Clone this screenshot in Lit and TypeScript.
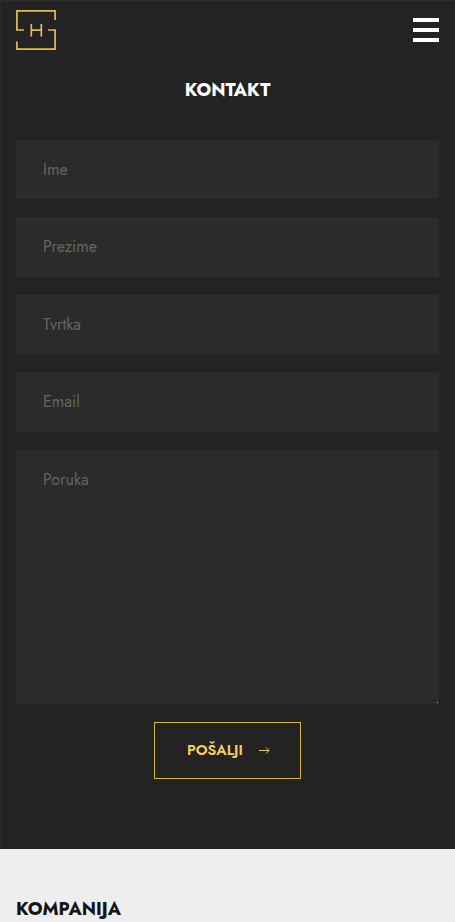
import { LitElement, html, css } from "lit";
import { customElement } from "lit/decorators.js";

const FIELDS = [
  { name: "ime", label: "Ime" },
  { name: "prezime", label: "Prezime" },
  { name: "tvrtka", label: "Tvrtka" },
  { name: "email", label: "Email" },
];

@customElement("app-root")
export class AppRoot extends LitElement {
  static styles = css`
    :host {
      display: block;
      height: 922px;
      overflow: hidden;
      background: #eee;
      font-family: Jost, Lato, "Open Sans", sans-serif;
    }
    * {
      box-sizing: border-box;
    }
    .dark {
      height: 849px;
      background: #232323;
      padding: 9px 16px 0 15px;
      border-left: 1px solid #292929;
      border-top: 1px solid #2b2b2b;
    }
    .bar {
      display: flex;
      justify-content: space-between;
      height: 40px;
    }
    .logo {
      display: block;
      width: 40px;
      height: 40px;
    }
    .menu {
      display: flex;
      flex-direction: column;
      gap: 6px;
      width: 26px;
      padding: 0;
      margin: 8px 0 0;
      border: 0;
      background: none;
      height: 24px;
    }
    .line {
      display: block;
      height: 4px;
      background: #fff;
    }
    h1 {
      margin: 28px 0 0;
      height: 24px;
      font-size: 18px;
      line-height: 24px;
      font-weight: 700;
      text-align: center;
      color: #fff;
    }
    form {
      display: flex;
      flex-direction: column;
      gap: 18px;
      margin-top: 37.6px;
    }
    input,
    textarea {
      display: block;
      width: 100%;
      margin: 0;
      border: 0;
      border-radius: 0;
      outline: 0;
      background: #2b2b2b;
      color: #fff;
      font: 400 16px/24px Jost, Lato, "Open Sans", sans-serif;
      padding: 0 27px;
    }
    input {
      height: 59.5px;
    }
    textarea {
      height: 254px;
      padding-top: 18px;
      resize: none;
    }
    ::placeholder {
      color: #646464;
      opacity: 1;
    }
    .message {
      position: relative;
    }
    .grip {
      position: absolute;
      right: 1px;
      bottom: 1px;
      width: 1px;
      height: 1px;
      background: #b0b0b0;
    }
    .send {
      display: flex;
      align-items: center;
      align-self: center;
      gap: 16px;
      width: 147px;
      height: 57px;
      padding: 0 0 0 32px;
      border: 1px solid #d9b44d;
      background: none;
      color: #f6cd63;
      font: 600 14.6px/20px Jost, Lato, "Open Sans", sans-serif;
    }
    .arrow {
      display: block;
      flex: none;
    }
    h2 {
      margin: 48px 0 0 16px;
      font-size: 18px;
      line-height: 24px;
      font-weight: 700;
      color: #151515;
    }
  `;

  render() {
    return html`
      <section class="dark">
        <header class="bar">
          <svg class="logo" viewBox="0 0 40 40" fill="none" stroke="#e6b954" stroke-width="1.7">
            <path d="M39.1 10V.9H.9V20H8M32 20h7.1v19.1H.9V31.500M15.300 14v12.500M25.300 14v12.500M15.300 20.200h10" />
          </svg>
          <button class="menu" aria-label="Izbornik">
            <span class="line"></span><span class="line"></span><span class="line"></span>
          </button>
        </header>
        <h1>KONTAKT</h1>
        <form>
          ${FIELDS.map(
            (f) => html`<input name=${f.name} placeholder=${f.label} />`
          )}
          <div class="message">
            <textarea name="poruka" placeholder="Poruka"></textarea>
            <span class="grip"></span>
          </div>
          <button class="send" type="button">
            <span>POŠALJI</span>
            <svg class="arrow" width="11" height="8" viewBox="0 0 11 8" fill="none" stroke="#f0c965">
              <path d="M0 4.500h10M7 1.500l3 3-3 3" />
            </svg>
          </button>
        </form>
      </section>
      <h2>KOMPANIJA</h2>
    `;
  }
}
